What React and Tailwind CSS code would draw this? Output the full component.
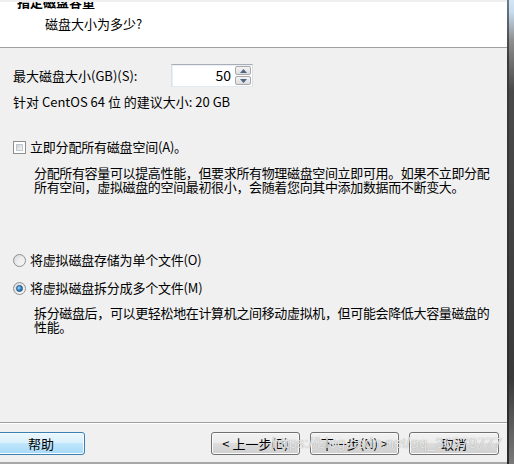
import React from 'react';

const FONT = { fontFamily: '"Noto Sans CJK SC", "Noto Sans", sans-serif' };

function Checkbox() {
  return (
    <div className="w-[13px] h-[13px] border border-[#8e8f8f] bg-white p-[2px] shrink-0">
      <div className="w-full h-full border border-[#c3c6ca] bg-gradient-to-br from-[#cdd1d6] to-[#f7f7f7]" />
    </div>
  );
}

function Radio({ checked }) {
  return (
    <div className="w-[13px] h-[13px] rounded-full border border-[#8e8f8f] bg-gradient-to-br from-[#d6d8db] to-[#fbfbfb] flex items-center justify-center shrink-0">
      {checked ? (
        <div className="w-[7px] h-[7px] rounded-full bg-[radial-gradient(circle_at_35%_35%,#a9dcf7_0%,#3d8fd1_45%,#1b4f86_100%)] border border-[#1c4f7e]" />
      ) : (
        <div className="w-[7px] h-[7px] rounded-full bg-gradient-to-br from-[#e4e5e7] to-[#f8f8f8]" />
      )}
    </div>
  );
}

function SpinArrow({ up }) {
  return (
    <svg width="7" height="4" viewBox="0 0 7 4">
      {up ? <path d="M0 4 L3.5 0 L7 4 Z" fill="#4e6487" /> : <path d="M0 0 L3.5 4 L7 0 Z" fill="#4e6487" />}
    </svg>
  );
}

function Button({ children, className = '' }) {
  return (
    <div
      className={`h-[23px] rounded-[3px] border border-[#707070] shadow-[inset_0_0_0_1px_#fbfbfb] bg-[linear-gradient(to_bottom,#f2f2f2_0%,#ebebeb_50%,#dddddd_50%,#cfcfcf_100%)] flex items-center justify-center text-[13px] text-black whitespace-nowrap ${className}`}
    >
      {children}
    </div>
  );
}

export default function App() {
  return (
    <div className="w-[514px] h-[464px] flex overflow-hidden bg-[#f0f0f0] relative" style={FONT}>
      <div className="w-[507px] flex flex-col">
        {/* header */}
        <div className="h-[48px] bg-white border-t-2 border-t-[#f0f0f0] border-b border-b-[#a0a0a0] pl-[17px] overflow-hidden">
          <div className="-mt-[8px] text-[13px] leading-[16px] font-bold text-black">指定磁盘容量</div>
          <div className="mt-[6px] ml-[28px] text-[13px] leading-[16px] text-black">磁盘大小为多少?</div>
        </div>

        {/* body */}
        <div className="flex-1 px-[13px] text-[13px] text-black">
          <div className="mt-[16px] h-[23px] flex items-center">
            <div className="w-[158px]">最大磁盘大小(GB)(S):</div>
            <div className="w-[82px] h-[23px] flex bg-white border border-t-[#abadb3] border-x-[#dbdfe6] border-b-[#e3e9ef] shadow-[inset_1px_1px_0_#e6f0fa]">
              <div className="flex-1 text-right pr-[4px] leading-[21px] text-[14px]">50</div>
              <div className="w-[17px] flex flex-col gap-[1px] py-[1px] pr-[1px]">
                <div className="flex-1 border border-[#a9a9a9] rounded-[2px] bg-gradient-to-b from-[#f5f5f5] to-[#dcdcdc] flex items-center justify-center">
                  <SpinArrow up />
                </div>
                <div className="flex-1 border border-[#a9a9a9] rounded-[2px] bg-gradient-to-b from-[#f5f5f5] to-[#dcdcdc] flex items-center justify-center">
                  <SpinArrow />
                </div>
              </div>
            </div>
          </div>
          <div className="mt-[7px] leading-[15px]">针对 CentOS 64 位 的建议大小: 20 GB</div>

          <div className="mt-[30px] h-[16px] flex items-center gap-[4px]">
            <Checkbox />
            <span className="tracking-[-0.2px]">立即分配所有磁盘空间(A)。</span>
          </div>
          <div className="mt-[11px] ml-[21px] leading-[14px] whitespace-nowrap tracking-[-0.35px]">
            <div>分配所有容量可以提高性能，但要求所有物理磁盘空间立即可用。如果不立即分配</div>
            <div>所有空间，虚拟磁盘的空间最初很小，会随着您向其中添加数据而不断变大。</div>
          </div>

          <div className="mt-[58px] h-[16px] flex items-center gap-[4px]">
            <Radio />
            <span className="tracking-[-0.2px]">将虚拟磁盘存储为单个文件(O)</span>
          </div>
          <div className="mt-[12px] h-[16px] flex items-center gap-[4px]">
            <Radio checked />
            <span className="tracking-[-0.2px]">将虚拟磁盘拆分成多个文件(M)</span>
          </div>
          <div className="mt-[10px] ml-[21px] leading-[14px] whitespace-nowrap tracking-[-0.35px]">
            <div>拆分磁盘后，可以更轻松地在计算机之间移动虚拟机，但可能会降低大容量磁盘的</div>
            <div>性能。</div>
          </div>
        </div>

        {/* footer */}
        <div className="h-[42px] border-t border-t-[#a0a0a0] border-b-2 border-b-[#a8a8a8] pt-[9px] flex shadow-[inset_0_1px_0_#ffffff]">
          <div className="-ml-[3px] w-[88px] h-[23px] rounded-[3px] border border-[#3c7fb1] shadow-[inset_0_0_0_1px_#f4fbff] bg-[linear-gradient(to_bottom,#eaf6fd_0%,#d9f0fc_50%,#bee6fd_50%,#a7d9f5_100%)] flex items-center justify-center text-[13px] text-black">
            帮助
          </div>
          <div className="flex-1" />
          <div className="flex gap-[10px] pr-[8px]">
            <Button className="w-[89px]">&lt; 上一步(B)</Button>
            <Button className="w-[89px]">下一步(N) &gt;</Button>
            <Button className="w-[90px]">取消</Button>
          </div>
        </div>
      </div>

      {/* window frame edge */}
      <div className="w-[7px] flex">
        <div className="w-[2px] bg-[linear-gradient(to_bottom,#6f7c88_0px,#3a3a3a_60px,#2b2b2b_464px)]" />
        <div className="flex-1 bg-[linear-gradient(to_bottom,#d3e6f7_0px,#c6dcef_12px,#8f8f8f_40px,#4a4a4a_90px,#3a3a3a_380px,#7a7a7a_464px)]" />
      </div>

      {/* watermark */}
      <div
        className="absolute left-[272px] top-[434px] text-[15px] leading-[18px] text-white/75 whitespace-nowrap pointer-events-none [text-shadow:0_0_1px_#8a8a8a]"
        style={{ fontFamily: '"Liberation Sans", Arial, sans-serif' }}
      >
        https://blog.csdn.net/qq_36579777
      </div>
    </div>
  );
}
